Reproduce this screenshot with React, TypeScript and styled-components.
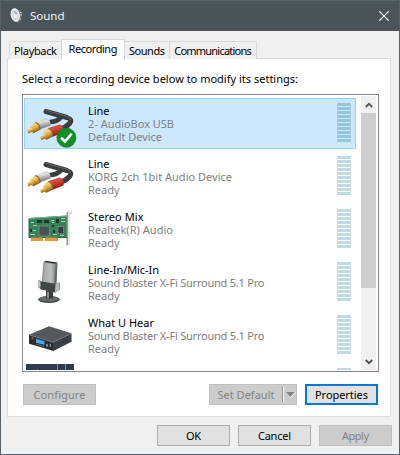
import React, { useLayoutEffect, useRef } from "react";
import styled, { createGlobalStyle, css } from "styled-components";

const Global = createGlobalStyle`
  * { box-sizing: border-box; }
  html, body { margin: 0; padding: 0; }
  body {
    width: 400px; height: 455px; overflow: hidden;
    font: 11px/13px "Noto Sans", "Open Sans", sans-serif;
    color: #000;
  }
`;

const Dialog = styled.div`
  width: 400px; height: 455px;
  display: flex; flex-direction: column;
  background: #f0f0f0;
  border: 1px solid #596266; border-top: 0;
`;
const TitleBar = styled.header`
  height: 31px; flex: none;
  display: flex; align-items: center;
  padding: 0 10px 0 9px;
  background: #4a5459; color: #f2f2f2;
  border-top: 1px solid #5d6668;
`;
const Title = styled.h1`
  margin: 0 auto 0 6px; font-size: 11.5px; font-weight: 400; line-height: 16px;
`;
const CloseButton = styled.button`
  display: flex; padding: 0; border: 0; background: none;
`;
const TabStrip = styled.nav`
  display: flex; align-items: flex-end;
  height: 28px; flex: none; padding-left: 8px;
  position: relative;
`;
const Tab = styled.button<{ $w: number; $active?: boolean }>`
  width: ${(p) => p.$w}px; height: 18px; flex: none;
  padding: 0; display: flex; align-items: center; justify-content: center;
  font: inherit; color: #000; background: #f0f0f0;
  border: 1px solid #d9d9d9; border-bottom: 0; border-left-width: 0;
  &:first-child { border-left-width: 1px; }
  ${(p) => p.$active && css`
    height: 21px; margin-left: -1px; margin-bottom: -1px; padding-bottom: 3px;
    border-left-width: 1px; background: #fff;
  `}
`;
const Panel = styled.section`
  width: 384px; height: 359px; flex: none; margin-left: 6px;
  margin-top: -1px;
  padding: 13px 11px 0 14px;
  background: #fff; border: 1px solid #dcdcdc;
`;
const Prompt = styled.p`
  margin: 0; height: 22px; line-height: 14px;
`;
const ListBox = styled.div`
  width: 357px; height: 278px; display: flex; justify-content: space-between;
  border: 1px solid #828790; padding: 1px 2px 1px 1px; background: #fff;
`;
const Rows = styled.ul`
  width: 332px; margin: 0; padding: 2px 0 0; list-style: none; overflow: hidden;
`;
const Row = styled.li<{ $selected?: boolean }>`
  height: 51px; margin-bottom: 2px; display: flex;
  padding: 0 4px 0 1px;
  border: 1px solid ${(p) => (p.$selected ? "#99d1ff" : "transparent")};
  background: ${(p) => (p.$selected ? "#cce8ff" : "transparent")};
`;
const DeviceText = styled.div`
  flex: 1; padding: 5px 0 0 14px; line-height: 13px; color: #808080; white-space: nowrap;
`;
const DeviceName = styled.div`color: #000;`;
const Meter = styled.div`
  width: 14px; padding-top: 4px; display: flex; flex-direction: column; gap: 1px;
`;
const MeterBar = styled.i<{ $selected?: boolean }>`
  height: 3px; flex: none; background: ${(p) => (p.$selected ? "#93c7dd" : "#c0dce3")};
`;
const ScrollBar = styled.div`
  width: 15px; display: flex; flex-direction: column; background: #f0f0f0;
`;
const ScrollArrow = styled.div`
  height: 17px; flex: none; display: flex; align-items: center; justify-content: center;
`;
const Thumb = styled.div`height: 175px; background: #cdcdcd;`;
const Spacer = styled.div`flex: 1;`;
const PanelActions = styled.div`
  display: flex; margin: 12px 1px 0 1px;
`;
const ActionGap = styled.div`width: 8px; flex: none;`;
const DialogActions = styled.footer`
  display: flex; justify-content: flex-end; gap: 8px; padding: 8px 7px 0 0;
`;
const Button = styled.button<{ $w?: number; $primary?: boolean }>`
  width: ${(p) => p.$w ?? 73}px; height: 21px; padding: 0;
  display: flex; align-items: center; justify-content: center;
  font: inherit; color: #000; background: #e1e1e1;
  border: ${(p) => (p.$primary ? "2px solid #0078d7" : "1px solid #adadad")};
  &:disabled { color: #838383; background: #cccccc; border-color: #bfbfbf; }
`;
const SplitLabel = styled.span`flex: 1; display: flex; justify-content: center;`;
const SplitArrow = styled.span`
  width: 14px; height: 15px; display: flex; align-items: center;
  border-left: 1px solid #8d8d8d; box-shadow: inset 1px 0 #fff; padding-left: 2px;
`;
const Fitted = styled.span`display: inline-block; white-space: nowrap;`;
const DeviceArt = styled.svg`width: 48px; height: 48px; flex: none; overflow: visible;`;

/* Spreads the letters of a label so that it fills the given width. */
function Label({ w, children }: { w: number; children: string }) {
  const ref = useRef<HTMLSpanElement>(null);
  useLayoutEffect(() => {
    const el = ref.current;
    if (!el) return;
    el.style.letterSpacing = "0px";
    const gap = (w - el.getBoundingClientRect().width) / (children.length - 1);
    el.style.letterSpacing = `${gap}px`;
    el.style.marginRight = `${-gap}px`;
  }, [w, children]);
  return <Fitted ref={ref}>{children}</Fitted>;
}

const SpeakerIcon = () => (
  <svg width="14" height="16" viewBox="0 0 14 16">
    <path d="M6 1 L10 2 L12 6 L11 12 L8 15 L6 14Z" fill="#747b7f" />
    <ellipse cx="5.2" cy="7" rx="4" ry="6.3" transform="rotate(-12 5.2 7)" fill="#d9dfe2" stroke="#f2f4f5" />
    <path d="M3 3 Q7 6 5 12 Q8 9 7 4Z" fill="#a2adb3" />
    <ellipse cx="5.5" cy="8" rx="1.5" ry="2.3" fill="#eef2f4" />
    <path d="M10 4.5h1.5M10.5 7h1.5M10 11h1" stroke="#d0d4d6" />
  </svg>
);

const CableIcon = ({ checked }: { checked?: boolean }) => (
  <DeviceArt viewBox="0 0 48 48">
    <defs>
      <linearGradient id="gold" x1="0" y1="0" x2=".35" y2="1">
        <stop offset="0" stopColor="#a87520" /><stop offset=".35" stopColor="#f5d87c" />
        <stop offset=".65" stopColor="#d6a03b" /><stop offset="1" stopColor="#83520f" />
      </linearGradient>
      <linearGradient id="silver" x1="0" y1="0" x2=".3" y2="1">
        <stop offset="0" stopColor="#777" /><stop offset=".35" stopColor="#e4e4e4" /><stop offset="1" stopColor="#707274" />
      </linearGradient>
      <linearGradient id="red" x1="0" y1="0" x2=".3" y2="1">
        <stop offset="0" stopColor="#8f1c16" /><stop offset=".35" stopColor="#df4f3e" /><stop offset="1" stopColor="#8c1512" />
      </linearGradient>
    </defs>
    <path d="M20 12.5 L41 18.5 Q47 20.5 43.5 24.5 Q39.500 29 34 30" fill="none" stroke="#3a3c3e" strokeWidth="5" strokeLinecap="round" />
    <path d="M23 23 Q30 23.500 36 17.500" fill="none" stroke="#3a3c3e" strokeWidth="4.600" />
    <path d="M20 11.300 L40 17 Q44.500 18 44.500 21" fill="none" stroke="#65696c" strokeWidth="1" />
    <path d="M9.500 23 L20.500 19.500 Q25 20.500 24.500 26.500 L13.500 30.500Z" fill="url(#silver)" />
    <path d="M4 28 L9.500 23 Q14 25 14 31 L7 34.500Z" fill="url(#gold)" />
    <path d="M1 31 L6 28.500 L7.500 32 L2.500 34.500Z" fill="url(#gold)" />
    <path d="M9.500 23.500 Q14 25 14 31" fill="none" stroke="#8c6422" strokeWidth="1.200" />
    <path d="M22.500 29 L34 25.500 Q38.500 27.500 37.500 33.500 L26 38Z" fill="url(#red)" />
    <path d="M17 34 L22.500 29 Q27 31 27 37.500 L20 41Z" fill="url(#gold)" />
    <path d="M14 38 L19 35 L20.500 39 L15.500 41Z" fill="url(#gold)" />
    <path d="M22.500 29.500 Q27 31 26.500 37.500" fill="none" stroke="#8c6422" strokeWidth="1.200" />
    {checked && <>
      <circle cx="40.4" cy="38.7" r="9.600" fill="#109026" stroke="#0a7a1e" strokeWidth=".6" />
      <path d="M35 38.700 L39 42.500 L45.700 34.700" fill="none" stroke="#fff" strokeWidth="2.600" />
    </>}
  </DeviceArt>
);

const CardIcon = () => (
  <DeviceArt viewBox="0 0 48 48">
    <path d="M3 13.5 L41 11 V32.5 H3Z" fill="#35835c" stroke="#286847" />
    <path d="M3 13.5 L41 11" stroke="#80b997" />
    <path d="M5 32.500 H17 V36 H5ZM19 32.500 H32 V36 H19Z" fill="#d98d27" />
    <path d="M7 32.500v3.500M9 32.500v3.500M11 32.500v3.500M13 32.500v3.500M15 32.500v3.500M21 32.500v3.500M23 32.500v3.500M25 32.500v3.500M27 32.500v3.500M29 32.500v3.500" stroke="#f1bc63" strokeWidth=".6" />
    <path d="M13 21 h10.500 v10 h-10.500Z" fill="#4c5352" stroke="#8ba195" strokeWidth="1" strokeDasharray="1 .6" />
    <path d="M32 21.500h5.500v7h-5.500Z" fill="#333b38" stroke="#a2b3a8" strokeWidth=".8" strokeDasharray="1 .7" />
    <g fill="#24372f"><path d="M11 15h5v3h-5zM18 15h5v3h-5zM30 14h3v4h-3zM4 24h2v3H4zM26 20h2v2h-2zM27 25h2v3h-2z" /></g>
    <g fill="#b3d1b5"><path d="M5 17h3v1H5zM7 20h4v1H7zM4 29h5v1H4zM25 15h3v1h-3zM26 17h2v1h-2zM35 13h4v1h-4zM35 16h4v1h-4zM27 29h4v1h-4zM34 30h4v1h-4zM7 25h3v1H7z" /></g>
    <path d="M40.5 7.5 L42 6.5 V40 L40.5 41Z" fill="#92989a" />
    <path d="M42 7 H45.5 V8.5 H43 V40" fill="none" stroke="#c9cccd" />
  </DeviceArt>
);

const MicIcon = () => (
  <DeviceArt viewBox="0 0 48 48">
    <defs><linearGradient id="mic" x1="0" x2="1"><stop stopColor="#a2a4a4" /><stop offset=".65" stopColor="#bdbfbf" /><stop offset="1" stopColor="#8b8e8e" /></linearGradient></defs>
    <ellipse cx="23" cy="41.500" rx="11" ry="3.500" fill="#4b4e4f" />
    <ellipse cx="23" cy="40.700" rx="10" ry="2.500" fill="#686c6e" />
    <path d="M20 33h7v7.500h-7Z" fill="#3a3c3d" /><path d="M21 34h2v6h-2Z" fill="#8a8e90" />
    <path d="M18 4 L29.500 5.500 L28 28 L16 26Z" fill="url(#mic)" stroke="#777a7b" strokeWidth=".8" />
    <path d="M18 4 L20 2.700 L31.500 4.500 L29.500 5.800Z" fill="#333536" />
    <path d="M29.500 5.500 L31.500 4.500 L30.500 28 L28 29Z" fill="#66696a" />
    <path d="M12.500 22 L16 23.500 L30 26 L34 24.500 L33.500 32 L29 34.500 L15 31.500 L12.500 29Z" fill="#414446" />
    <path d="M29.500 26 L33.500 24.500 V32 L29 34.500Z" fill="#b7babb" />
    <path d="M12.500 22.500h2v7h-2Z" fill="#c5c7c7" />
  </DeviceArt>
);

const BoxIcon = () => (
  <DeviceArt viewBox="0 0 48 48">
    <g transform="translate(0 1.8)">
      <path d="M3 22 L23 13.500 L45.500 20.500 L27 29.500Z" fill="#55585c" />
      <path d="M3 22 L27 29.500 V38 L3 31Z" fill="#292d32" />
      <path d="M27 29.500 L45.500 20.500 V29 L27 38.500Z" fill="#3c4044" />
      <path d="M3 22 L27 29.500 L45.500 20.500" stroke="#7b8084" strokeWidth=".7" fill="none" />
      <path d="M10 26 L18.500 28.500 V32 L10 30Z" fill="#45acee" />
      <path d="M20 31 L22 31.500 V34 L20 33.500Z M23.500 31h1.500v3h-1.500z" fill="#7e8589" />
      <path d="M10 31.500 L18 33.500" stroke="#80888e" strokeWidth=".7" />
      <circle cx="6.5" cy="25.300" r="1.200" fill="#d33d3a" />
      <path d="M38 27.500v3M41 26v3" stroke="#25292c" strokeWidth=".7" />
    </g>
  </DeviceArt>
);

const RackIcon = () => (
  <DeviceArt viewBox="0 0 48 48">
    <path d="M0 0h48v48H0Z" fill="#2c3a4c" />
    <path d="M31.5 0v48M39.5 0v48" stroke="#7b9a99" />
    <path d="M11 5.500h1" stroke="#75808a" />
  </DeviceArt>
);

const Chevron = ({ down }: { down?: boolean }) => (
  <svg width="8" height="8" viewBox="0 0 8 8">
    <path d={down ? "M.8 2 L4 5.2 L7.2 2" : "M.8 6 L4 2.8 L7.2 6"} fill="none" stroke="#555" strokeWidth="1.9" />
  </svg>
);

const devices: { name: string; nw: number; model: string; mw: number; status: string; sw: number; icon: React.ReactNode; selected?: boolean }[] = [
  { name: "Line", nw: 21.500, model: "2- AudioBox USB", mw: 86, status: "Default Device", sw: 74, icon: <CableIcon checked />, selected: true },
  { name: "Line", nw: 21.500, model: "KORG 2ch 1bit Audio Device", mw: 144, status: "Ready", sw: 31.500, icon: <CableIcon /> },
  { name: "Stereo Mix", nw: 55.500, model: "Realtek(R) Audio", mw: 85, status: "Ready", sw: 31.500, icon: <CardIcon /> },
  { name: "Line-In/Mic-In", nw: 71, model: "Sound Blaster X-Fi Surround 5.1 Pro", mw: 176.500, status: "Ready", sw: 31.500, icon: <MicIcon /> },
  { name: "What U Hear", nw: 66, model: "Sound Blaster X-Fi Surround 5.1 Pro", mw: 176.500, status: "Ready", sw: 31.500, icon: <BoxIcon /> },
];

const Levels = ({ selected }: { selected?: boolean }) => (
  <Meter>{Array.from({ length: 10 }, (_, i) => <MeterBar key={i} $selected={selected} />)}</Meter>
);

export default function App() {
  return (
    <>
      <Global />
      <Dialog>
        <TitleBar>
          <SpeakerIcon />
          <Title><Label w={34.5}>Sound</Label></Title>
          <CloseButton aria-label="Close">
            <svg width="10" height="10" viewBox="0 0 10 10"><path d="M.3 .3 L9.7 9.7 M9.7 .3 L.3 9.7" stroke="#fff" strokeWidth="1.2" /></svg>
          </CloseButton>
        </TitleBar>
        <TabStrip>
          <Tab $w={53}><Label w={43}>Playback</Label></Tab>
          <Tab $w={64} $active><Label w={49}>Recording</Label></Tab>
          <Tab $w={45}><Label w={36}>Sounds</Label></Tab>
          <Tab $w={87}><Label w={77.5}>Communications</Label></Tab>
        </TabStrip>
        <Panel>
          <Prompt><Label w={276}>Select a recording device below to modify its settings:</Label></Prompt>
          <ListBox>
            <Rows>
              {devices.map((d, i) => (
                <Row key={i} $selected={d.selected}>
                  {d.icon}
                  <DeviceText>
                    <DeviceName><Label w={d.nw}>{d.name}</Label></DeviceName>
                    <div><Label w={d.mw}>{d.model}</Label></div>
                    <div><Label w={d.sw}>{d.status}</Label></div>
                  </DeviceText>
                  <Levels selected={d.selected} />
                </Row>
              ))}
              <Row><RackIcon /><Spacer /><Levels /></Row>
            </Rows>
            <ScrollBar>
              <ScrollArrow><Chevron /></ScrollArrow>
              <Thumb />
              <Spacer />
              <ScrollArrow><Chevron down /></ScrollArrow>
            </ScrollBar>
          </ListBox>
          <PanelActions>
            <Button disabled><Label w={52}>Configure</Label></Button>
            <Spacer />
            <Button disabled $w={88}>
              <SplitLabel><Label w={57}>Set Default</Label></SplitLabel>
              <SplitArrow>
                <svg width="11" height="7" viewBox="0 0 11 7"><path d="M1 1h9L5.5 6Z" fill="#838383" /><path d="M5.5 6.5 L10.5 1.2" stroke="#fff" /></svg>
              </SplitArrow>
            </Button>
            <ActionGap />
            <Button $primary><Label w={53}>Properties</Label></Button>
          </PanelActions>
        </Panel>
        <DialogActions>
          <Button><Label w={15}>OK</Label></Button>
          <Button><Label w={33}>Cancel</Label></Button>
          <Button disabled><Label w={27}>Apply</Label></Button>
        </DialogActions>
      </Dialog>
    </>
  );
}
